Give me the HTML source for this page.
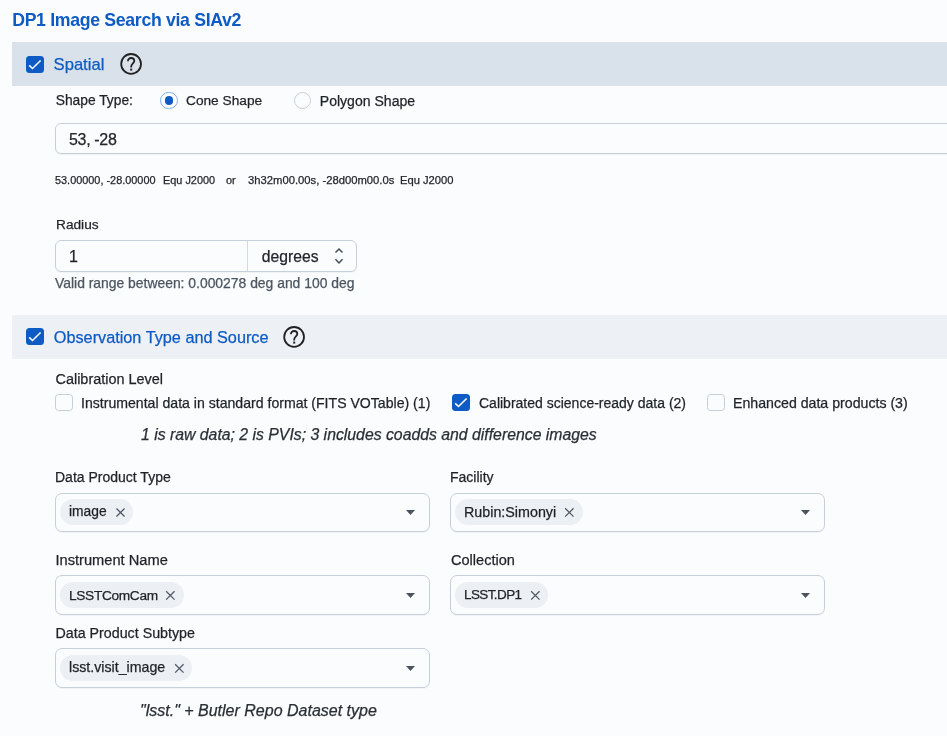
<!DOCTYPE html>
<html><head><meta charset="utf-8">
<style>
html,body{margin:0;padding:0;}
body{width:947px;height:736px;overflow:hidden;background:#fafcfe;position:relative;font-family:"Liberation Sans",sans-serif;color:#24292e;}
.t{position:absolute;white-space:pre;line-height:1;-webkit-text-stroke:0.25px currentColor;}
#wrap{position:absolute;left:0;top:0;width:947px;height:736px;will-change:transform;}
.hdr{position:absolute;left:12px;width:935px;height:44px;}
.cb{position:absolute;width:18px;height:17px;border-radius:3.5px;box-sizing:border-box;}
.cb.on{background:#0e5bc5;}
.cb.off{background:#fbfcfe;border:1px solid #c3cfdb;}
.cb svg{position:absolute;left:0;top:0;}
.help{position:absolute;width:22px;height:22px;}
.inp{position:absolute;box-sizing:border-box;border:1px solid #c5d0db;border-radius:6px;background:#fafcfe;box-shadow:0 1px 1px rgba(0,0,0,0.04);}
.sel{position:absolute;box-sizing:border-box;border:1px solid #c5d0db;border-radius:7px;background:#fafcfe;height:39px;width:375px;box-shadow:0 1px 1px rgba(0,0,0,0.04);}
.chip{position:absolute;height:26px;border-radius:13px;background:#eceff3;top:4.8px;left:3.8px;}
.caret{position:absolute;width:9px;height:5px;}
.x{position:absolute;width:12px;height:12px;}
.blue{color:#0f5bc4;}
.lab{font-size:14px;color:#1f2327;}
</style></head><body><div id="wrap">

<div class="t blue" style="left:12.2px;top:12.3px;font-size:17.7px;font-weight:bold;letter-spacing:-0.32px;-webkit-text-stroke:0;">DP1 Image Search via SIAv2</div>

<!-- Spatial header -->
<div class="hdr" style="top:42px;background:#d9e2ea;"></div>
<div class="cb on" style="left:26px;top:56px;"><svg width="18" height="18" viewBox="0 0 18 18"><path d="M3.2 9.4 L6.5 12.5 L14.6 4.5" fill="none" stroke="#fff" stroke-width="1.6"/></svg></div>
<div class="t blue" style="left:53.6px;top:57px;font-size:16.6px;">Spatial</div>
<svg class="help" style="left:120px;top:53.4px;" viewBox="0 0 22 22"><circle cx="11.1" cy="10.9" r="9.9" fill="none" stroke="#222" stroke-width="1.8"/><path d="M7.9 8.3 C7.9 6.2 9.4 5 11.1 5 C12.9 5 14.3 6.2 14.3 7.9 C14.3 10 11.2 10.8 11.2 13.4 L11.2 14.4" fill="none" stroke="#222" stroke-width="1.8"/><rect x="10.2" y="15.6" width="2" height="2" fill="#222"/></svg>

<div class="t lab" style="left:55.7px;top:94px;font-size:13.8px;">Shape Type:</div>
<div style="position:absolute;left:160px;top:91.5px;width:17.5px;height:17.5px;box-sizing:border-box;border:1px solid #7db0ee;border-radius:50%;background:#fdfeff;"></div>
<div style="position:absolute;left:164.75px;top:96.15px;width:8.5px;height:8.5px;border-radius:50%;background:#0f5bc4;"></div>
<div class="t lab" style="left:186px;top:94px;font-size:13.7px;">Cone Shape</div>
<div style="position:absolute;left:293.5px;top:91.5px;width:17.5px;height:17.5px;box-sizing:border-box;border:1px solid #c3cfdb;border-radius:50%;background:#fbfcfe;"></div>
<div class="t lab" style="left:319.8px;top:94px;font-size:14.05px;">Polygon Shape</div>

<div class="inp" style="left:55px;top:123px;width:920px;height:31px;"></div>
<div class="t" style="left:69px;top:132.2px;font-size:16px;letter-spacing:-0.33px;color:#23272c;">53, -28</div>

<div class="t" style="left:55px;top:175px;font-size:10.9px;color:#23272c;">53.00000, -28.00000</div>
<div class="t" style="left:163px;top:175px;font-size:10.9px;color:#23272c;">Equ J2000</div>
<div class="t" style="left:226px;top:175px;font-size:10.9px;color:#23272c;">or</div>
<div class="t" style="left:248px;top:175px;font-size:11.25px;color:#23272c;">3h32m00.00s, -28d00m00.0s</div>
<div class="t" style="left:400px;top:175px;font-size:11.2px;color:#23272c;">Equ J2000</div>

<div class="t lab" style="left:56px;top:218px;font-size:13.7px;">Radius</div>
<div class="inp" style="left:55px;top:240px;width:302px;height:32px;"></div>
<div style="position:absolute;left:247px;top:241px;width:1px;height:30px;background:#d3dbe3;"></div>
<div class="t" style="left:69px;top:248.5px;font-size:16px;color:#23272c;">1</div>
<div class="t" style="left:261.8px;top:248.5px;font-size:15.7px;color:#23272c;">degrees</div>
<svg style="position:absolute;left:333px;top:247px;" width="12" height="18" viewBox="0 0 12 18"><path d="M2.5 5.6 L6 2 L9.5 5.6 M2.5 12.2 L6 16 L9.5 12.2" fill="none" stroke="#454d57" stroke-width="1.5"/></svg>
<div class="t" style="left:55px;top:277px;font-size:13.9px;color:#4b5560;">Valid range between: 0.000278 deg and 100 deg</div>

<!-- Observation header -->
<div class="hdr" style="top:315px;background:#edf1f6;"></div>
<div class="cb on" style="left:26px;top:328px;"><svg width="18" height="18" viewBox="0 0 18 18"><path d="M3.2 9.4 L6.5 12.5 L14.6 4.5" fill="none" stroke="#fff" stroke-width="1.6"/></svg></div>
<div class="t blue" style="left:53.8px;top:329.3px;font-size:16.25px;">Observation Type and Source</div>
<svg class="help" style="left:283px;top:326.4px;" viewBox="0 0 22 22"><circle cx="11.1" cy="10.9" r="9.9" fill="none" stroke="#222" stroke-width="1.8"/><path d="M7.9 8.3 C7.9 6.2 9.4 5 11.1 5 C12.9 5 14.3 6.2 14.3 7.9 C14.3 10 11.2 10.8 11.2 13.4 L11.2 14.4" fill="none" stroke="#222" stroke-width="1.8"/><rect x="10.2" y="15.6" width="2" height="2" fill="#222"/></svg>

<div class="t lab" style="left:55.5px;top:372px;font-size:14.45px;">Calibration Level</div>
<div class="cb off" style="left:55px;top:394px;"></div>
<div class="t lab" style="left:81px;top:396px;font-size:14.1px;">Instrumental data in standard format (FITS VOTable) (1)</div>
<div class="cb on" style="left:452px;top:394px;"><svg width="18" height="18" viewBox="0 0 18 18"><path d="M3.2 9.4 L6.5 12.5 L14.6 4.5" fill="none" stroke="#fff" stroke-width="1.6"/></svg></div>
<div class="t lab" style="left:479px;top:396px;font-size:14px;">Calibrated science-ready data (2)</div>
<div class="cb off" style="left:707px;top:394px;"></div>
<div class="t lab" style="left:733px;top:396px;font-size:14.17px;">Enhanced data products (3)</div>

<div class="t" style="left:141px;top:427px;font-size:15.8px;font-style:italic;color:#2a2f34;">1 is raw data; 2 is PVIs; 3 includes coadds and difference images</div>

<!-- selects -->
<div class="t lab" style="left:55px;top:470px;font-size:14px;">Data Product Type</div>
<div class="sel" style="left:55px;top:493px;"><div class="chip" style="width:73px;"></div><svg class="caret" style="left:349.9px;top:16px;" viewBox="0 0 9 5"><path d="M0 0 L9 0 L4.5 5 Z" fill="#4b535e"/></svg></div>
<div class="t lab" style="left:69px;top:505.2px;font-size:13.8px;">image</div>
<svg class="x" style="left:115px;top:507px;" width="12" height="12" viewBox="0 0 12 12"><path d="M1.45 1.45 L9.55 9.55 M9.55 1.45 L1.45 9.55" stroke="#505864" stroke-width="1.25"/></svg>

<div class="t lab" style="left:450px;top:470px;font-size:14px;">Facility</div>
<div class="sel" style="left:450px;top:493px;"><div class="chip" style="width:128px;"></div><svg class="caret" style="left:349.9px;top:16px;" viewBox="0 0 9 5"><path d="M0 0 L9 0 L4.5 5 Z" fill="#4b535e"/></svg></div>
<div class="t lab" style="left:464px;top:504.7px;font-size:14.3px;">Rubin:Simonyi</div>
<svg class="x" style="left:563px;top:506px;" width="12" height="12" viewBox="0 0 12 12"><path d="M2.15 2.25 L10.55 10.65 M10.55 2.25 L2.15 10.65" stroke="#505864" stroke-width="1.25"/></svg>

<div class="t lab" style="left:55.5px;top:553px;font-size:14.65px;">Instrument Name</div>
<div class="sel" style="left:55px;top:575px;height:40px;"><div class="chip" style="width:124px;top:5.6px;"></div><svg class="caret" style="left:349.9px;top:17px;" viewBox="0 0 9 5"><path d="M0 0 L9 0 L4.5 5 Z" fill="#4b535e"/></svg></div>
<div class="t lab" style="left:69px;top:588.8px;font-size:13.7px;letter-spacing:-0.33px;">LSSTComCam</div>
<svg class="x" style="left:164px;top:589px;" width="12" height="12" viewBox="0 0 12 12"><path d="M2.15 2.25 L10.55 10.65 M10.55 2.25 L2.15 10.65" stroke="#505864" stroke-width="1.25"/></svg>

<div class="t lab" style="left:451px;top:553px;font-size:14.55px;">Collection</div>
<div class="sel" style="left:450px;top:575px;height:40px;"><div class="chip" style="width:93px;top:5.6px;"></div><svg class="caret" style="left:349.9px;top:17px;" viewBox="0 0 9 5"><path d="M0 0 L9 0 L4.5 5 Z" fill="#4b535e"/></svg></div>
<div class="t lab" style="left:464px;top:588.2px;font-size:13.5px;letter-spacing:-0.6px;">LSST.DP1</div>
<svg class="x" style="left:529px;top:589px;" width="12" height="12" viewBox="0 0 12 12"><path d="M2.15 2.25 L10.55 10.65 M10.55 2.25 L2.15 10.65" stroke="#505864" stroke-width="1.25"/></svg>

<div class="t lab" style="left:55.5px;top:626px;font-size:14.25px;">Data Product Subtype</div>
<div class="sel" style="left:55px;top:648px;height:40px;"><div class="chip" style="width:132px;top:5.6px;"></div><svg class="caret" style="left:349.9px;top:17px;" viewBox="0 0 9 5"><path d="M0 0 L9 0 L4.5 5 Z" fill="#4b535e"/></svg></div>
<div class="t lab" style="left:69px;top:659.6px;font-size:14.2px;">lsst.visit_image</div>
<svg class="x" style="left:173px;top:662px;" width="12" height="12" viewBox="0 0 12 12"><path d="M2.15 2.25 L10.55 10.65 M10.55 2.25 L2.15 10.65" stroke="#505864" stroke-width="1.25"/></svg>

<div class="t" style="left:140px;top:702.5px;font-size:16px;font-style:italic;color:#2a2f34;">"lsst." + Butler Repo Dataset type</div>

</div></body></html>
